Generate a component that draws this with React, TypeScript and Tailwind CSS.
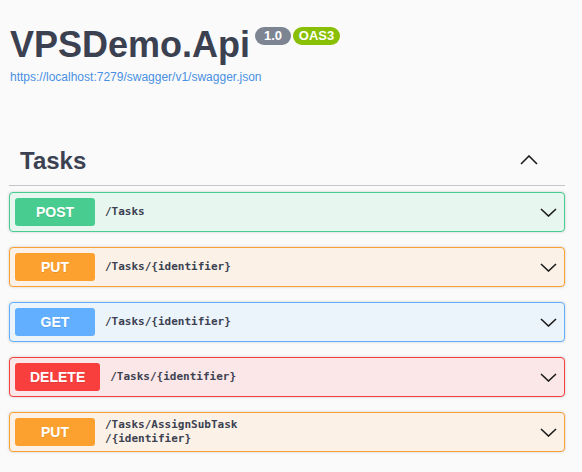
import React from "react";

type Op = {
  method: string;
  path: React.ReactNode;
  badge: string;
  block: string;
};

const ops: Op[] = [
  {
    method: "POST",
    path: "/Tasks",
    badge: "bg-[#49cc90]",
    block: "border-[#49cc90] bg-[#e8f6f0]",
  },
  {
    method: "PUT",
    path: "/Tasks/{identifier}",
    badge: "bg-[#fca130]",
    block: "border-[#fca130] bg-[#fbf1e6]",
  },
  {
    method: "GET",
    path: "/Tasks/{identifier}",
    badge: "bg-[#61affe]",
    block: "border-[#61affe] bg-[#ebf3fb]",
  },
  {
    method: "DELETE",
    path: "/Tasks/{identifier}",
    badge: "bg-[#f93e3e]",
    block: "border-[#f93e3e] bg-[#fbe7e7]",
  },
  {
    method: "PUT",
    path: (
      <>
        <span className="block">/Tasks/AssignSubTask</span>
        <span className="block">/{"{identifier}"}</span>
      </>
    ),
    badge: "bg-[#fca130]",
    block: "border-[#fca130] bg-[#fbf1e6]",
  },
];

function ChevronDown() {
  return (
    <svg width="17" height="9" viewBox="0 0 17 9" fill="none" className="text-[#1b1b1b]">
      <polyline points="1,1 8.5,8 16,1" stroke="currentColor" strokeWidth="1.6" />
    </svg>
  );
}

function ChevronUp() {
  return (
    <svg width="18" height="10" viewBox="0 0 18 10" fill="none" className="text-[#1b1b1b]">
      <polyline points="1,9 9,1 17,9" stroke="currentColor" strokeWidth="1.6" />
    </svg>
  );
}

export default function App() {
  return (
    <div className="min-h-[472px] bg-[#fafafa] font-['Liberation_Sans',Arial,sans-serif] text-[#3b4151]">
      {/* info header */}
      <div className="pl-[10px] pt-[27px]">
        <div className="flex items-start">
          <h2 className="text-[36px] leading-[36px] font-bold">VPSDemo.Api</h2>
          <span className="ml-[5px] w-[36px] rounded-full bg-[#7d8492] py-[2px] text-center text-[13px] leading-[14px] font-bold text-white">
            1.0
          </span>
          <span className="ml-[2px] w-[47px] rounded-full bg-[#89bf04] py-[2px] text-center text-[13px] leading-[14px] font-bold text-white">
            OAS3
          </span>
        </div>
        <a className="mt-[6px] block text-[12px] leading-[16px] text-[#4990e2]">
          https://localhost:7279/swagger/v1/swagger.json
        </a>
      </div>

      {/* tag section */}
      <div className="ml-[9px] mt-[51px] w-[556px]">
        <div className="flex items-center justify-between border-b border-[#c4c6cb] pl-[11px] pr-[27px] pt-[10px] pb-[9px]">
          <h3 className="text-[24px] leading-[30px] font-bold">Tasks</h3>
          <span className="mb-[3px]">
            <ChevronUp />
          </span>
        </div>

        <div className="mt-[6px] flex flex-col gap-[15px]">
          {ops.map((op, i) => (
            <div
              key={i}
              className={`flex items-center rounded-[4px] border p-[5px] shadow-[0_0_3px_rgba(0,0,0,0.19)] ${op.block}`}
            >
              <span
                className={`h-[28px] min-w-[80px] rounded-[3px] px-[15px] text-center text-[14px] leading-[28px] font-bold text-white [text-shadow:0_1px_0_rgba(0,0,0,0.1)] ${op.badge}`}
              >
                {op.method}
              </span>
              <span className="ml-[10px] flex-1 font-['DejaVu_Sans_Mono',monospace] text-[11px] leading-[14px] font-semibold text-[#3b4151]">
                {op.path}
              </span>
              <span className="mr-[2px] flex items-center">
                <ChevronDown />
              </span>
            </div>
          ))}
        </div>
      </div>
    </div>
  );
}
